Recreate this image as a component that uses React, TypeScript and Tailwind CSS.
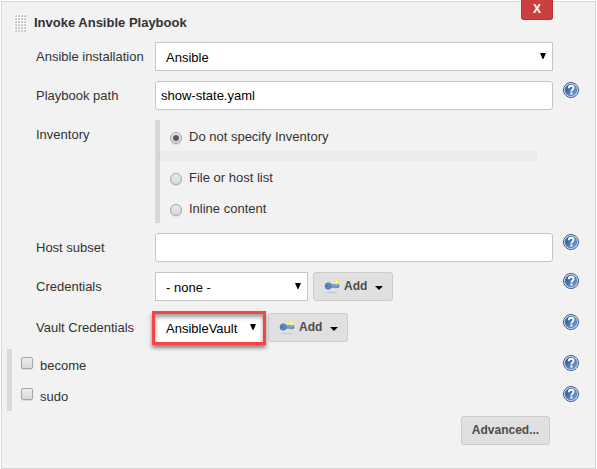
import React from "react";

const field = "h-[29px] border border-[#c6c6c6] bg-white text-[13px] text-black";
const button =
  "flex h-[29px] items-center rounded-[3px] border border-[#cbcbcb] bg-[#e0e0e0] text-[12px] font-bold text-[#4d4d4d]";

function Help({ className = "" }: { className?: string }) {
  return (
    <svg className={`block size-4 shrink-0 ${className}`} viewBox="0 0 16 16" aria-label="Help">
      <defs>
        <linearGradient id="helpFill" x1="0" y1="0" x2="1" y2="1">
          <stop offset="0" stopColor="#204a87" />
          <stop offset="1" stopColor="#7ea6d8" />
        </linearGradient>
      </defs>
      <circle cx="8" cy="8" r="7.5" fill="#f4f7fc" stroke="#2f5796" />
      <circle cx="8" cy="8" r="6" fill="url(#helpFill)" stroke="#3f66a2" strokeWidth=".5" />
      <path d="M5.7 6.2C5.8 4.500 6.900 3.700 8.200 3.700c1.500 0 2.400.9 2.400 2.100 0 1.600-2.200 1.700-2.200 3.700" fill="none" stroke="#fff" strokeWidth="1.900" />
      <rect x="7.300" y="10.500" width="2.200" height="2" fill="#fff" />
    </svg>
  );
}

function Arrow({ className = "" }: { className?: string }) {
  return (
    <svg className={`block h-[6px] w-[6px] shrink-0 ${className}`} viewBox="0 0 6 6">
      <path d="M0 0h6L3.400 6h-.8z" fill="#000" />
    </svg>
  );
}

function AddButton() {
  return (
    <button className={`${button} w-20`}>
      <svg className="ml-[10px] block h-4 w-4 shrink-0" viewBox="0 0 16 16">
        <ellipse cx="8" cy="13.500" rx="6" ry=".8" fill="#c9c9c9" />
        <path d="M6 5.500h8.500l.5.800v1.800l-1 .9-1-.8-1 .9-1-.8H6z" fill="#6d96cb" stroke="#4a74ab" strokeWidth=".6" />
        <path d="M6 6.200h8" stroke="#a9c4e6" strokeWidth=".7" />
        <circle cx="4.200" cy="7" r="3.200" fill="#5b88c2" stroke="#4670a8" strokeWidth=".6" />
        <circle cx="3" cy="7" r=".8" fill="#315b94" />
        <circle cx="12.500" cy="3" r="2.400" fill="#f6ee5a" />
        <circle cx="12.500" cy="3" r="1" fill="#fffbc0" />
      </svg>
      <span className="ml-[4px] h-[15px] leading-[15px]">Add</span>
      <svg className="ml-[8px] mt-[2px] block h-[4px] w-[8px]" viewBox="0 0 8 4">
        <path d="M0 0h8L4 4z" fill="#000" />
      </svg>
    </button>
  );
}

function Row({ label, help, children }: { label: string; help?: boolean; children: React.ReactNode }) {
  return (
    <div className="flex items-start">
      <div className="w-[119px] shrink-0 pt-[6px] leading-[18px]">{label}</div>
      <div className="flex w-[398px] shrink-0">{children}</div>
      {help && <Help className="ml-[10px] mt-px" />}
    </div>
  );
}

function Radio({ label, checked }: { label: string; checked?: boolean }) {
  return (
    <label className="flex h-[18px] items-center">
      <span className="mt-[3px] flex size-3 items-center justify-center rounded-full border border-[#a6a6a6] bg-linear-to-b from-[#e8e8e8] to-[#dadada] shadow-[0_1px_1px_#dadada]">
        {checked && <span className="size-[6px] rounded-full bg-[#5a5a5a]" />}
      </span>
      <span className="ml-[7px] mt-[2px] leading-[18px]">{label}</span>
    </label>
  );
}

function CheckRow({ label }: { label: string }) {
  return (
    <div className="flex h-[31px] items-start">
      <span className="ml-[9px] mt-2 size-3 rounded-[2px] border border-[#a6a6a6] bg-linear-to-b from-[#ececec] to-[#dadada] shadow-[0_1px_1px_#dadada]" />
      <span className="ml-[7px] mt-2 grow leading-[18px]">{label}</span>
      <Help className="mt-[6px]" />
    </div>
  );
}

export default function App() {
  return (
    <div className="h-[469px] w-[597px] overflow-hidden bg-white pl-px pt-px font-['Liberation_Sans',Arial,sans-serif] text-[13px] text-[#333]">
      <div className="h-[468px] w-[595px] border border-[#d5d5d5] bg-[#f2f2f2]">
        <div className="flex h-10 items-start">
          <svg className="ml-3 mt-3 block h-[18px] w-3" viewBox="0 0 12 18">
            <defs>
              <pattern id="grip" width="3" height="3" patternUnits="userSpaceOnUse">
                <rect width="3" height="3" fill="#fafafa" />
                <rect width="2" height="2" y="1" x="1" fill="#c4c4c0" />
                <rect width="1" height="1" y="1" x="1" fill="#deded9" />
              </pattern>
            </defs>
            <rect width="12" height="18" fill="url(#grip)" />
          </svg>
          <h1 className="ml-[8px] mt-[12px] grow font-bold leading-[18px]">Invoke Ansible Playbook</h1>
          <button className="-mt-[2px] mr-[42px] h-[20px] w-8 rounded-b-[3px] border border-t-0 border-[#b93333] bg-[#cc3f3f] text-[12px] font-bold leading-[17px] text-white">
            X
          </button>
        </div>
        <div className="flex flex-col gap-[10px] pl-[34px]">
          <Row label="Ansible installation">
            <div className={`${field} flex w-full items-start pl-[10px] leading-[29px]`}>
              <span className="grow">Ansible</span>
              <Arrow className="mr-[6px] mt-[10px]" />
            </div>
          </Row>
          <Row label="Playbook path" help>
            <input className={`${field} w-full rounded-[3px] px-[5px]`} defaultValue="show-state.yaml" />
          </Row>
          <Row label="Inventory">
            <div className="flex h-[103px] w-full">
              <div className="w-[5px] bg-[#d9d9d9]" />
              <div className="pt-[7px]">
                <div className="pl-[10px]"><Radio label="Do not specify Inventory" checked /></div>
                <div className="-ml-[3px] mt-[6px] h-[10px] w-[380px] bg-black/[0.028]" />
                <div className="flex flex-col gap-[13px] pl-[10px] pt-[7px]">
                  <Radio label="File or host list" />
                  <Radio label="Inline content" />
                </div>
              </div>
            </div>
          </Row>
          <Row label="Host subset" help>
            <input className={`${field} w-full rounded-[3px]`} />
          </Row>
          <Row label="Credentials" help>
            <div className={`${field} mr-[5px] flex w-[153px] items-start pl-[10px] leading-[29px]`}>
              <span className="grow">- none -</span>
              <Arrow className="mr-[6px] mt-[10px]" />
            </div>
            <AddButton />
          </Row>
        </div>
        <div className="mt-3 pl-[34px]">
          <Row label="Vault Credentials" help>
            <div className="-mb-[3px] -ml-[3px] -mt-[2px] mr-[2px] flex h-[34px] w-[114px] items-start border-[3px] border-[#fa4343] bg-white pl-[11px] pt-[4px] text-black shadow-[0_3px_4px_rgba(0,0,0,0.45),inset_0_3px_4px_rgba(0,0,0,0.4)]">
              <span className="grow pt-[2px] leading-[18px]">AnsibleVault</span>
              <Arrow className="mr-[7px] mt-[6px]" />
            </div>
            <AddButton />
          </Row>
        </div>
        <div className="ml-[5px] mt-[7px] h-[62px] w-[572px] border-l-[5px] border-[#d9d9d9]">
          <CheckRow label="become" />
          <CheckRow label="sudo" />
        </div>
        <button className={`${button} ml-[459px] mt-[5px] w-[89px] justify-center pb-[2px]`}>Advanced...</button>
      </div>
    </div>
  );
}
